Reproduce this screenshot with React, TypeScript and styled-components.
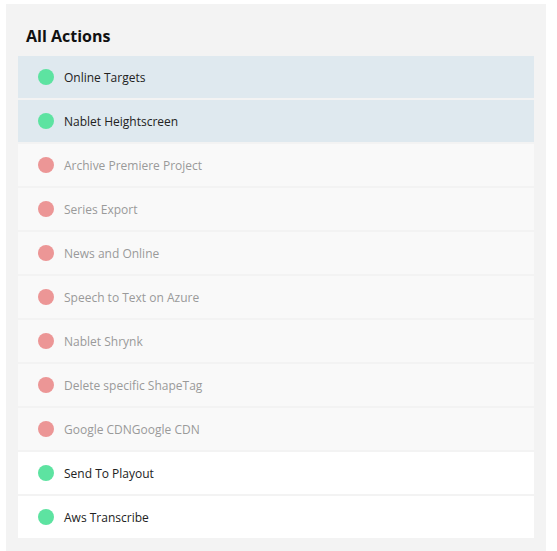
import styled, { createGlobalStyle } from "styled-components";

const GlobalStyle = createGlobalStyle`
    body {
        margin: 0;
        background: #ffffff;
        font-family: "Open Sans", "Liberation Sans", sans-serif;
    }
`;

const Panel = styled.div`
    margin: 4px 11px 0 6px;
    padding: 20px 12px 13px 12px;
    background-color: #f3f3f3;
`;

const Title = styled.h2`
    margin: 0 0 8px 8px;
    font-size: 16px;
    font-weight: 700;
    line-height: 24px;
    color: #111111;
`;

const List = styled.ul`
    list-style: none;
    margin: 0;
    padding: 0;
    display: flex;
    flex-direction: column;
    gap: 2px;
`;

type Kind = "selected" | "disabled" | "enabled";

const rowBg: Record<Kind, string> = {
    selected: "#dfe9ef",
    disabled: "#f9f9f9",
    enabled: "#ffffff",
};

const Row = styled.li<{ $kind: Kind }>`
    height: 42px;
    display: flex;
    align-items: center;
    gap: 10px;
    padding-left: 20px;
    background-color: ${(p) => rowBg[p.$kind]};
`;

const Dot = styled.span<{ $on: boolean }>`
    width: 16px;
    height: 16px;
    border-radius: 50%;
    flex-shrink: 0;
    background-color: ${(p) => (p.$on ? "#5de3a1" : "#ec9696")};
`;

const Label = styled.span<{ $on: boolean }>`
    font-size: 12px;
    color: ${(p) => (p.$on ? "#222222" : "#9a9a9a")};
`;

const actions: { name: string; kind: Kind }[] = [
    { name: "Online Targets", kind: "selected" },
    { name: "Nablet Heightscreen", kind: "selected" },
    { name: "Archive Premiere Project", kind: "disabled" },
    { name: "Series Export", kind: "disabled" },
    { name: "News and Online", kind: "disabled" },
    { name: "Speech to Text on Azure", kind: "disabled" },
    { name: "Nablet Shrynk", kind: "disabled" },
    { name: "Delete specific ShapeTag", kind: "disabled" },
    { name: "Google CDNGoogle CDN", kind: "disabled" },
    { name: "Send To Playout", kind: "enabled" },
    { name: "Aws Transcribe", kind: "enabled" },
];

export default function App() {
    return <>
        <GlobalStyle />
        <Panel>
            <Title>All Actions</Title>
            <List>
                {actions.map((a) => {
                    const on = a.kind !== "disabled";
                    return <Row key={a.name} $kind={a.kind}>
                        <Dot $on={on} />
                        <Label $on={on}>{a.name}</Label>
                    </Row>;
                })}
            </List>
        </Panel>
    </>;
}
